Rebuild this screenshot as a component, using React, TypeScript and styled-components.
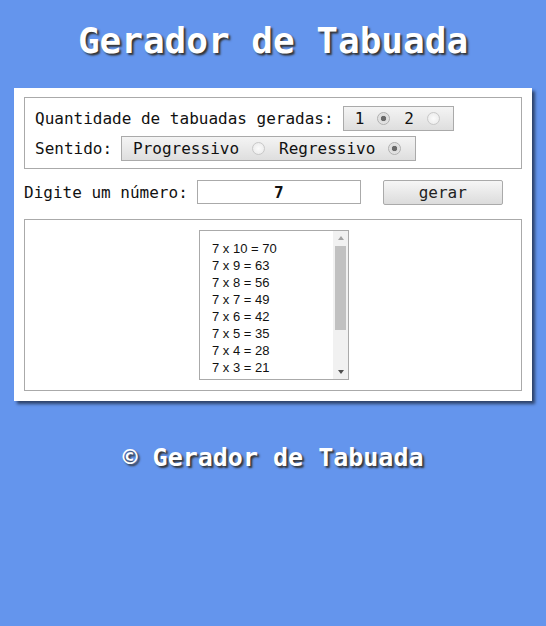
import { createGlobalStyle, styled } from "styled-components";

const GlobalStyle = createGlobalStyle`
  html, body {
    margin: 0;
    padding: 0;
    background: #6495ed;
  }
  body {
    font-family: "DejaVu Sans Mono", "Liberation Mono", monospace;
    font-size: 16px;
    color: #111;
  }
`;

const Page = styled.div`
  min-height: 626px;
  background: #6495ed;
  padding-top: 20px;
`;

const Title = styled.h1`
  margin: 0 0 26px;
  font-size: 36px;
  line-height: 42px;
  font-weight: bold;
  text-align: center;
  color: #fff;
  text-shadow: 2px 2px 2px #333;
`;

const Panel = styled.main`
  margin: 0 14px;
  padding: 9px 10px 10px;
  background: #fff;
  box-shadow: 3px 3px 3px rgba(0, 0, 0, 0.55);
`;

const Box = styled.fieldset`
  margin: 0;
  padding: 8px 10px 7px;
  border: 1px solid #aaa;
  display: flex;
  flex-direction: column;
  gap: 5px;
`;

const Row = styled.div`
  display: flex;
  align-items: center;
  gap: 9px;
  height: 25px;
`;

const Choices = styled.div<{ $end: number }>`
  display: flex;
  align-items: center;
  gap: 14px;
  height: 23px;
  padding: 0 ${(p) => p.$end}px 0 11px;
  border: 1px solid #aaa;
  background: linear-gradient(#f4f4f4, #dedede);
`;

const Choice = styled.label`
  display: flex;
  align-items: center;
  gap: 13px;
`;

const Radio = styled.input.attrs({ type: "radio" })`
  appearance: none;
  box-sizing: border-box;
  margin: 0;
  width: 13px;
  height: 13px;
  border-radius: 50%;
  border: 1px solid #c8c8c8;
  background: radial-gradient(#fbfbfb, #e8e8e8);
  &:checked {
    border-color: #b0b0b0;
    background: radial-gradient(circle, #6a6a6a 0 2.4px, #dcdcdc 3px, #ececec);
  }
`;

const NumberRow = styled.div`
  display: flex;
  align-items: center;
  margin: 11px 0 15px;
  height: 24px;
`;

const NumberInput = styled.input`
  box-sizing: border-box;
  width: 164px;
  height: 24px;
  margin-left: 9px;
  border: 1px solid #aaa;
  font-family: inherit;
  font-size: 16px;
  font-weight: bold;
  text-align: center;
  color: #111;
  padding: 0;
`;

const Button = styled.button`
  box-sizing: border-box;
  width: 120px;
  height: 25px;
  margin-left: 22px;
  border: 1px solid #aaa;
  border-radius: 2px;
  background: linear-gradient(#f6f6f6, #dcdcdc);
  font-family: inherit;
  font-size: 16px;
  color: #222;
  padding: 0;
`;

const ResultBox = styled.fieldset`
  margin: 0;
  padding: 10px 0 10px;
  border: 1px solid #aaa;
  display: flex;
  justify-content: center;
`;

const List = styled.div`
  box-sizing: border-box;
  width: 150px;
  height: 150px;
  margin-left: 2px;
  border: 1px solid #aaa;
  display: flex;
`;

const Options = styled.div`
  flex: 1;
  padding: 9px 0 0 12px;
  font-family: "Liberation Sans", Arial, sans-serif;
  font-size: 13px;
  color: #111;
`;

const Item = styled.div`
  height: 17px;
  line-height: 17px;
  white-space: nowrap;
`;

const ScrollBar = styled.div`
  width: 15px;
  background: #f1f1f1;
  display: flex;
  flex-direction: column;
`;

const ArrowCell = styled.div`
  height: 14px;
  display: flex;
  align-items: center;
  justify-content: center;
`;

const Arrow = styled.span<{ $down?: boolean }>`
  width: 0;
  height: 0;
  border-left: 3.5px solid transparent;
  border-right: 3.5px solid transparent;
  ${(p) =>
    p.$down
      ? "border-top: 4px solid #505050;"
      : "border-bottom: 4px solid #a3a3a3;"}
`;

const Track = styled.div`
  flex: 1;
  padding: 1px 2px 0 2px;
`;

const Thumb = styled.div`
  height: 84px;
  background: #c1c1c1;
`;

const Footer = styled.footer`
  margin-top: 42px;
  font-size: 25px;
  font-weight: bold;
  text-align: center;
  color: #fff;
  text-shadow: 2px 2px 2px #333;
`;

const num = 7;
// only the rows visible in the list window
const rows = [10, 9, 8, 7, 6, 5, 4, 3];

export default function App() {
  return (
    <Page>
      <GlobalStyle />
      <Title>Gerador de Tabuada</Title>
      <Panel>
        <Box>
          <Row>
            <span>Quantidade de tabuadas geradas:</span>
            <Choices $end={13}>
              <Choice>
                1<Radio name="qtd" defaultChecked />
              </Choice>
              <Choice>
                2<Radio name="qtd" />
              </Choice>
            </Choices>
          </Row>
          <Row>
            <span>Sentido:</span>
            <Choices $end={14}>
              <Choice>
                Progressivo<Radio name="sentido" />
              </Choice>
              <Choice>
                Regressivo<Radio name="sentido" defaultChecked />
              </Choice>
            </Choices>
          </Row>
        </Box>
        <NumberRow>
          <span>Digite um número:</span>
          <NumberInput defaultValue={num} />
          <Button>gerar</Button>
        </NumberRow>
        <ResultBox>
          <List role="listbox">
            <Options>
              {rows.map((n) => (
                <Item key={n} role="option">
                  {num} x {n} = {num * n}
                </Item>
              ))}
            </Options>
            <ScrollBar>
              <ArrowCell>
                <Arrow />
              </ArrowCell>
              <Track>
                <Thumb />
              </Track>
              <ArrowCell>
                <Arrow $down />
              </ArrowCell>
            </ScrollBar>
          </List>
        </ResultBox>
      </Panel>
      <Footer>© Gerador de Tabuada</Footer>
    </Page>
  );
}
